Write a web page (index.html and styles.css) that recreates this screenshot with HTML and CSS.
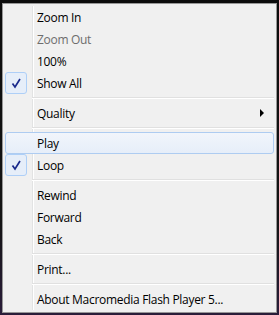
FILE: index.html
```html
<!DOCTYPE html>
<html lang="en">

<head>
    <meta charset="UTF-8">
    <meta name="viewport" content="width=device-width, initial-scale=1.0">
    <title>Flash Player Menu</title>
    <link rel="stylesheet" href="styles.css">
</head>

<body>
    <div class="backdrop">
        <div class="menu">
            <ul class="menu-list">
                <li class="item">Zoom In</li>
                <li class="item disabled">Zoom Out</li>
                <li class="item">100%</li>
                <li class="item checked">
                    <span class="check">
                        <svg width="22" height="22" viewBox="0 0 22 22">
                            <path d="M7.5 11.5 L10 15 L15 7" fill="none" stroke="#1a2a8c" stroke-width="1.7" />
                        </svg>
                    </span>
                    Show All
                </li>
                <li class="sep"></li>
                <li class="item">Quality<span class="arrow"></span></li>
                <li class="sep"></li>
                <li class="item hover">Play</li>
                <li class="item checked">
                    <span class="check">
                        <svg width="22" height="22" viewBox="0 0 22 22">
                            <path d="M7.5 11.5 L10 15 L15 7" fill="none" stroke="#1a2a8c" stroke-width="1.7" />
                        </svg>
                    </span>
                    Loop
                </li>
                <li class="sep"></li>
                <li class="item">Rewind</li>
                <li class="item">Forward</li>
                <li class="item">Back</li>
                <li class="sep"></li>
                <li class="item">Print...</li>
                <li class="sep"></li>
                <li class="item">About Macromedia Flash Player 5...</li>
            </ul>
        </div>
    </div>
</body>

</html>
```

FILE: styles.css
```css
* {
    margin: 0;
    padding: 0;
    box-sizing: border-box;
}

body {
    width: 279px;
    height: 315px;
    overflow: hidden;
    background: linear-gradient(#0c0c0c 0%, #141414 70%, #2a1d3a 100%);
    font-family: "Open Sans", "Segoe UI", sans-serif;
    font-size: 12px;
    letter-spacing: -0.3px;
}

.backdrop {
    padding: 3px 2px 2px 2px;
}

.menu {
    width: 275px;
    height: 310px;
    border: 1px solid #979797;
    padding: 2px;
    background-color: #f0f0f0;
    background-image: linear-gradient(to right, transparent 27px, #e2e3e3 27px, #e2e3e3 28px, #ffffff 28px, #ffffff 29px, transparent 29px);
    background-origin: content-box;
    background-repeat: no-repeat;
}

.menu-list {
    list-style: none;
}

.item {
    position: relative;
    height: 22px;
    display: flex;
    align-items: center;
    padding-left: 31px;
    color: #000;
    border: 1px solid transparent;
    border-radius: 3px;
}

.item.disabled {
    color: #6d6d6d;
}

.item.hover {
    border-color: #aeccf1;
    background: linear-gradient(#f1f5fb, #e6eef9);
}

.check {
    position: absolute;
    left: -1px;
    top: -1px;
    width: 22px;
    height: 22px;
    border: 1px solid #aecff7;
    border-radius: 3px;
    background: #e6eef9;
}

.check svg {
    position: absolute;
    left: -1px;
    top: -1px;
}

.arrow {
    margin-left: auto;
    margin-right: 9px;
    width: 0;
    height: 0;
    border-top: 4px solid transparent;
    border-bottom: 4px solid transparent;
    border-left: 4px solid #000;
}

.sep {
    height: 8px;
    margin-left: 27px;
    background: linear-gradient(transparent 3px, #e0e0e0 3px, #e0e0e0 4px, #ffffff 4px, #ffffff 5px, transparent 5px);
}
```
